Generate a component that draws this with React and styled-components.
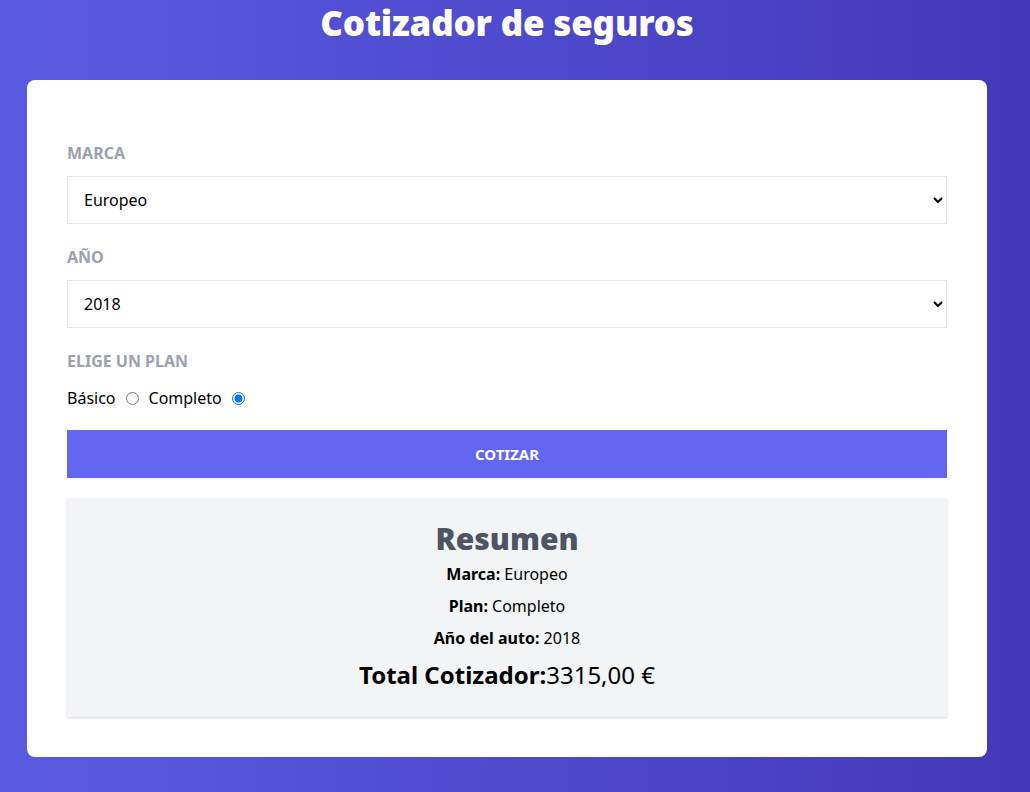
import * as React from 'react';
import styled, { createGlobalStyle } from 'styled-components';

const GlobalStyle = createGlobalStyle`
  * { box-sizing: border-box; }
  html, body { margin: 0; padding: 0; }
  body {
    min-height: 100vh;
    font-family: "Segoe UI", "Noto Sans", "Open Sans", sans-serif;
    font-size: 16px;
    line-height: 24px;
    color: #000;
    background: linear-gradient(to right, #5b5be2, #4338b9);
    background-attachment: fixed;
  }
`;

const Page = styled.div`
  width: 1014px;
  min-height: 100vh;
  display: flex;
  flex-direction: column;
  align-items: center;
`;

const Title = styled.h1`
  margin: 0;
  padding-top: 1px;
  font-size: 35px;
  line-height: 44px;
  font-weight: 900;
  color: #fff;
  text-align: center;
  letter-spacing: -0.2px;
`;

const Card = styled.div`
  margin-top: 35px;
  width: 960px;
  background: #fff;
  border-radius: 8px;
  padding: 40px;
`;

const Field = styled.div`
  margin: 21px 0 20px;
`;

const Label = styled.label`
  display: block;
  margin-bottom: 11px;
  font-weight: 700;
  text-transform: uppercase;
  color: #9ca3af;
`;

const Select = styled.select`
  display: block;
  width: 100%;
  height: 48px;
  padding: 0 12px;
  border: 1px solid #e5e7eb;
  background: #fff;
  font-family: inherit;
  font-size: 16px;
  color: #000;
  border-radius: 0;
`;

const RadioRow = styled.div`
  display: flex;
  align-items: center;
  margin-top: 13px;
`;

const Radio = styled.input`
  margin: 0 10px;
  width: 13px;
  height: 13px;
  accent-color: #0075ff;
`;

const Button = styled.button`
  display: block;
  width: 100%;
  height: 48px;
  border: none;
  background: #6366f1;
  color: #fff;
  font-family: inherit;
  font-size: 15px;
  font-weight: 700;
  text-transform: uppercase;
  cursor: pointer;
`;

const Summary = styled.div`
  margin-top: 20px;
  background: #f3f4f6;
  padding: 23px 20px 26px;
  text-align: center;
  box-shadow: 0 1px 3px rgba(0, 0, 0, 0.1), 0 1px 2px rgba(0, 0, 0, 0.06);
`;

const SummaryTitle = styled.h2`
  margin: 0 0 5px;
  font-size: 30px;
  line-height: 36px;
  font-weight: 900;
  color: #4b5563;
`;

const Line = styled.p`
  margin: 0 0 8px;
  b { font-weight: 700; }
`;

const Total = styled.p`
  margin: 9px 0 0;
  font-size: 24px;
  line-height: 32px;
  b { font-weight: 700; }
`;

export default function App() {
  const [marca, setMarca] = React.useState('Europeo');
  const [year, setYear] = React.useState('2018');
  const [plan, setPlan] = React.useState('Completo');

  return (
    <>
      <GlobalStyle />
      <Page>
        <Title>Cotizador de seguros</Title>
        <Card>
          <Field>
            <Label>Marca</Label>
            <Select value={marca} onChange={e => setMarca(e.target.value)}>
              <option>Americano</option>
              <option>Europeo</option>
              <option>Asiático</option>
            </Select>
          </Field>
          <Field>
            <Label>Año</Label>
            <Select value={year} onChange={e => setYear(e.target.value)}>
              {['2021', '2020', '2019', '2018', '2017', '2016'].map(y => (
                <option key={y}>{y}</option>
              ))}
            </Select>
          </Field>
          <Field>
            <Label>Elige un plan</Label>
            <RadioRow>
              <span>Básico</span>
              <Radio type="radio" name="plan" checked={plan === 'Básico'} onChange={() => setPlan('Básico')} />
              <span>Completo</span>
              <Radio type="radio" name="plan" checked={plan === 'Completo'} onChange={() => setPlan('Completo')} />
            </RadioRow>
          </Field>
          <Button>Cotizar</Button>
          <Summary>
            <SummaryTitle>Resumen</SummaryTitle>
            <Line><b>Marca:</b> {marca}</Line>
            <Line><b>Plan:</b> {plan}</Line>
            <Line><b>Año del auto:</b> {year}</Line>
            <Total><b>Total Cotizador:</b>3315,00 €</Total>
          </Summary>
        </Card>
      </Page>
    </>
  );
}
